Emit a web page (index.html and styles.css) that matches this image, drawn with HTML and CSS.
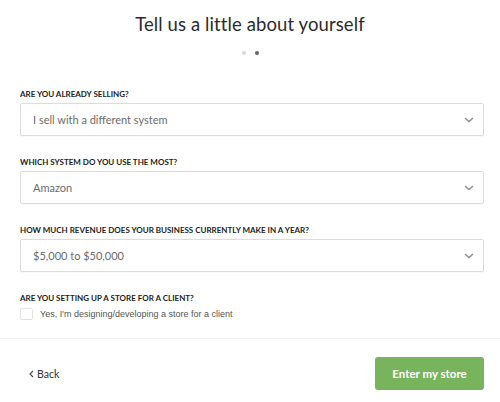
FILE: index.html
```html
<!DOCTYPE html>
<html>
<head>
<meta charset="utf-8">
<link rel="stylesheet" href="styles.css">
</head>
<body>
<div class="page">
  <header class="head">
    <h1 class="title">Tell us a little about yourself</h1>
    <div class="dots"><span class="dot"></span><span class="dot dot-on"></span></div>
  </header>
  <form class="form">
    <div class="field">
      <div class="label">ARE YOU ALREADY SELLING?</div>
      <div class="select"><span class="value">I sell with a different system</span>
        <svg class="chev" width="10" height="6" viewBox="0 0 10 6"><path d="M1 1 L5 4.6 L9 1" fill="none" stroke="#8c8c8c" stroke-width="1.4"/></svg></div>
    </div>
    <div class="field">
      <div class="label">WHICH SYSTEM DO YOU USE THE MOST?</div>
      <div class="select"><span class="value">Amazon</span>
        <svg class="chev" width="10" height="6" viewBox="0 0 10 6"><path d="M1 1 L5 4.6 L9 1" fill="none" stroke="#8c8c8c" stroke-width="1.4"/></svg></div>
    </div>
    <div class="field">
      <div class="label">HOW MUCH REVENUE DOES YOUR BUSINESS CURRENTLY MAKE IN A YEAR?</div>
      <div class="select"><span class="value">$5,000 to $50,000</span>
        <svg class="chev" width="10" height="6" viewBox="0 0 10 6"><path d="M1 1 L5 4.6 L9 1" fill="none" stroke="#8c8c8c" stroke-width="1.4"/></svg></div>
    </div>
    <div class="field field-check">
      <div class="label">ARE YOU SETTING UP A STORE FOR A CLIENT?</div>
      <div class="check-row"><span class="box"></span><span class="check-text">Yes, I'm designing/developing a store for a client</span></div>
    </div>
  </form>
  <footer class="foot">
    <span class="back"><svg class="back-chev" width="5" height="8" viewBox="0 0 5 8"><path d="M4 1 L1 4 L4 7" fill="none" stroke="#444" stroke-width="1.1"/></svg>Back</span>
    <span class="btn">Enter my store</span>
  </footer>
</div>
</body>
</html>
```
FILE: styles.css
```css
html, body { margin: 0; padding: 0; background: #fff; }
body { font-family: Lato, "Open Sans", sans-serif; color: #333; }
.page { width: 500px; height: 402px; overflow: hidden; }
.head { padding-top: 12px; display: flex; flex-direction: column; align-items: center; }
.title { margin: 0; font-size: 18.5px; line-height: 24px; font-weight: 400; color: #2b2b2b; letter-spacing: 0.1px; }
.dots { margin-top: 15px; display: flex; gap: 9px; }
.dot { width: 4px; height: 4px; border-radius: 50%; background: #d6d6d6; }
.dot-on { background: #666; }
.form { padding: 33px 16px 0 20px; display: flex; flex-direction: column; gap: 20px; }
.label { font-size: 8px; line-height: 12px; font-weight: 700; color: #222; margin-bottom: 3px; }
.select { height: 31px; border: 1px solid #dcdcdc; border-radius: 2px; display: flex; align-items: center; justify-content: space-between; padding: 0 9px 0 12px; box-shadow: 0 1px 1px rgba(0,0,0,0.03); }
.value { font-size: 11px; color: #6b6b6b; }
.chev { display: block; }
.field-check .label { margin-bottom: 4px; }
.check-row { display: flex; align-items: center; gap: 7px; }
.box { width: 11px; height: 10px; border: 1px solid #e2e2e2; border-radius: 2px; }
.check-text { font-family: "Liberation Sans", Arial, sans-serif; font-size: 9px; color: #555; }
.foot { margin-top: 18px; border-top: 1px solid #efefef; padding: 18px 16px 0 29px; display: flex; justify-content: space-between; align-items: center; }
.back { font-size: 10.5px; color: #333; display: flex; align-items: center; gap: 3px; }
.back-chev { display: block; }
.btn { width: 109px; height: 33px; background: #77b45b; border-radius: 3px; color: #fff; font-weight: 700; font-size: 11.5px; display: flex; align-items: center; justify-content: center; }
```
